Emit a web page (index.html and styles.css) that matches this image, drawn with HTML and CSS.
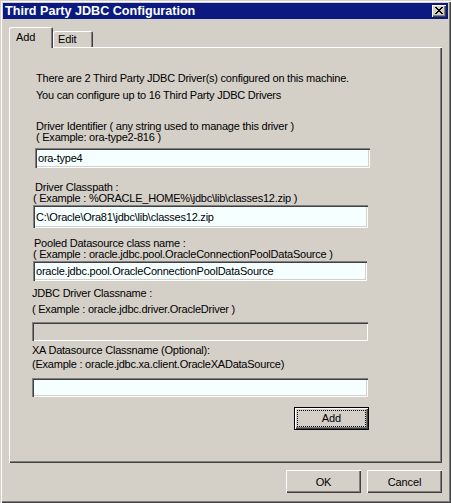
FILE: index.html
```html
<!DOCTYPE html>
<html>
<head>
<meta charset="utf-8">
<link rel="stylesheet" href="styles.css">
</head>
<body>
<div class="window">
  <div class="titlebar">
    <span class="title">Third Party JDBC Configuration</span>
    <span class="close"><svg width="8" height="7" viewBox="0 0 8 7"><path d="M0 0h2v1h-2zM6 0h2v1h-2zM1 1h2v1h-2zM5 1h2v1h-2zM2 2h4v1h-4zM3 3h2v1h-2zM2 4h4v1h-4zM1 5h2v1h-2zM5 5h2v1h-2zM0 6h2v1h-2zM6 6h2v1h-2z" fill="#000"/></svg></span>
  </div>
  <div class="tabs">
    <div class="tab active">Add</div>
    <div class="tab">Edit</div>
  </div>
  <div class="panel">
    <div class="intro">
      <p class="line">There are 2 Third Party JDBC Driver(s) configured on this machine.</p>
      <p class="line second">You can configure up to 16 Third Party JDBC Drivers</p>
    </div>
    <div class="field f1">
      <p class="line">Driver Identifier ( any string used to manage this driver )</p>
      <p class="line">( Example: ora-type2-816 )</p>
      <input class="input" type="text" value="ora-type4">
    </div>
    <div class="field f2">
      <p class="line">Driver Classpath :</p>
      <p class="line ex">( Example : %ORACLE_HOME%\jdbc\lib\classes12.zip )</p>
      <input class="input" type="text" value="C:\Oracle\Ora81\jdbc\lib\classes12.zip">
    </div>
    <div class="field f3">
      <p class="line">Pooled Datasource class name :</p>
      <p class="line ex">( Example : oracle.jdbc.pool.OracleConnectionPoolDataSource )</p>
      <input class="input" type="text" value="oracle.jdbc.pool.OracleConnectionPoolDataSource">
    </div>
    <div class="field f4">
      <p class="line">JDBC Driver Classname :</p>
      <p class="line ex">( Example : oracle.jdbc.driver.OracleDriver )</p>
      <input class="input disabled" type="text" value="" disabled>
    </div>
    <div class="field f5">
      <p class="line">XA Datasource Classname (Optional):</p>
      <p class="line ex">(Example : oracle.jdbc.xa.client.OracleXADataSource)</p>
      <input class="input" type="text" value="">
    </div>
    <button class="btn default"><span class="focus">Add</span></button>
  </div>
  <div class="footer">
    <button class="btn">OK</button>
    <button class="btn">Cancel</button>
  </div>
</div>
</body>
</html>
```

FILE: styles.css
```css
html, body {
  margin: 0;
  padding: 0;
  background: #d4d0c8;
}
.window {
  width: 451px;
  height: 503px;
  box-sizing: border-box;
  padding: 3px;
  background: #d4d0c8;
  box-shadow: inset 1px 1px 0 #d4d0c8, inset 2px 2px 0 #ffffff, inset -1px -1px 0 #404040, inset -2px -2px 0 #808080;
  font-family: "Liberation Sans", Arial, sans-serif;
  font-size: 11px;
  color: #000;
  display: flex;
  flex-direction: column;
}
.titlebar {
  height: 16px;
  background: #0a1a80;
  display: flex;
  align-items: center;
  justify-content: space-between;
  padding: 0 2px 0 2px;
}
.title {
  color: #fff;
  font-weight: bold;
  font-size: 12.6px;
  line-height: 16px;
}
.close {
  width: 14px;
  height: 12px;
  box-sizing: border-box;
  background: #d4d0c8;
  box-shadow: inset 1px 1px 0 #fff, inset -1px -1px 0 #404040, inset -2px -2px 0 #808080;
  display: flex;
  align-items: center;
  justify-content: center;
  padding-bottom: 1px;
}
.close svg {
  display: block;
  shape-rendering: crispEdges;
}
.tabs {
  margin-top: 8px;
  margin-left: 6px;
  height: 21px;
  display: flex;
  align-items: flex-end;
  margin-bottom: -1px;
  position: relative;
  z-index: 1;
  letter-spacing: -0.1px;
}
.tab {
  box-sizing: border-box;
  background: #d4d0c8;
  height: 16px;
  width: 40px;
  padding-left: 5px;
  margin-bottom: 1px;
  line-height: 17px;
  border-radius: 2px 2px 0 0;
  box-shadow: inset 1px 1px 0 #fff, inset -1px 0 0 #404040, inset -2px 0 0 #808080;
}
.tab.active {
  height: 21px;
  width: 44px;
  margin-bottom: 0;
  padding-left: 7px;
  line-height: 20px;
}
.panel {
  margin-left: 6px;
  width: 433px;
  height: 416px;
  box-sizing: border-box;
  padding-top: 26px;
  box-shadow: inset 1px 1px 0 #fff, inset -1px -1px 0 #404040, inset -2px -2px 0 #808080;
  display: flex;
  flex-direction: column;
  align-items: flex-start;
}
.line {
  margin: 0;
  line-height: 11px;
  height: 11px;
  white-space: nowrap;
  letter-spacing: -0.23px;
}
.intro {
  padding-left: 27px;
}
.intro .second {
  margin-top: 6px;
}
.field {
  display: flex;
  flex-direction: column;
  align-items: flex-start;
}
.input {
  box-sizing: border-box;
  border: none;
  margin: 0;
  padding: 0 0 0 3px;
  font-family: "Liberation Sans", Arial, sans-serif;
  font-size: 11px;
  letter-spacing: -0.23px;
  color: #000;
  background: #f5ffff;
  box-shadow: inset 1px 1px 0 #808080, inset 2px 2px 0 #404040, inset -1px -1px 0 #fff, inset -2px -2px 0 #d4d0c8;
  outline: none;
}
.input.disabled {
  background: #d4d0c8;
}
.f1 {
  margin-top: 20px;
  padding-left: 27px;
}
.f1 .input {
  margin-top: 5px;
  margin-left: -1px;
  width: 335px;
  height: 20px;
}
.f2 {
  margin-top: 14px;
  padding-left: 26px;
}
.f2 .ex {
  margin-left: -2px;
}
.f2 .input {
  margin-top: 1px;
  margin-left: -2px;
  width: 335px;
  height: 23px;
}
.f3 {
  margin-top: 10px;
  padding-left: 25px;
}
.f3 .ex {
  margin-left: -1px;
}
.f3 .input {
  margin-top: 1px;
  margin-left: -1px;
  width: 334px;
  height: 20px;
}
.f4, .f5 {
  padding-left: 23px;
}
.f4 {
  margin-top: 7px;
}
.f4 .ex {
  margin-top: 5px;
}
.f4 .input {
  margin-top: 7px;
  width: 336px;
  height: 19px;
}
.f5 {
  margin-top: 4px;
}
.f5 .ex {
  margin-top: 3px;
}
.f5 .input {
  margin-top: 8px;
  width: 336px;
  height: 19px;
}
.btn {
  width: 75px;
  height: 23px;
  box-sizing: border-box;
  border: none;
  margin: 0;
  padding: 0;
  background: #d4d0c8;
  font-family: "Liberation Sans", Arial, sans-serif;
  font-size: 11px;
  letter-spacing: -0.1px;
  color: #000;
  box-shadow: inset 1px 1px 0 #fff, inset -1px -1px 0 #404040, inset -2px -2px 0 #808080;
}
.btn.default {
  margin-top: 10px;
  margin-left: 285px;
  padding: 3px;
  box-shadow: inset 0 0 0 1px #000, inset 2px 2px 0 #fff, inset -2px -2px 0 #404040, inset -3px -3px 0 #808080;
}
.focus {
  display: block;
  height: 100%;
  box-sizing: border-box;
  border: 1px dotted #000;
  line-height: 15px;
}
.footer {
  margin-top: 7px;
  display: flex;
  justify-content: flex-end;
  gap: 6px;
  padding-right: 6px;
}
```
